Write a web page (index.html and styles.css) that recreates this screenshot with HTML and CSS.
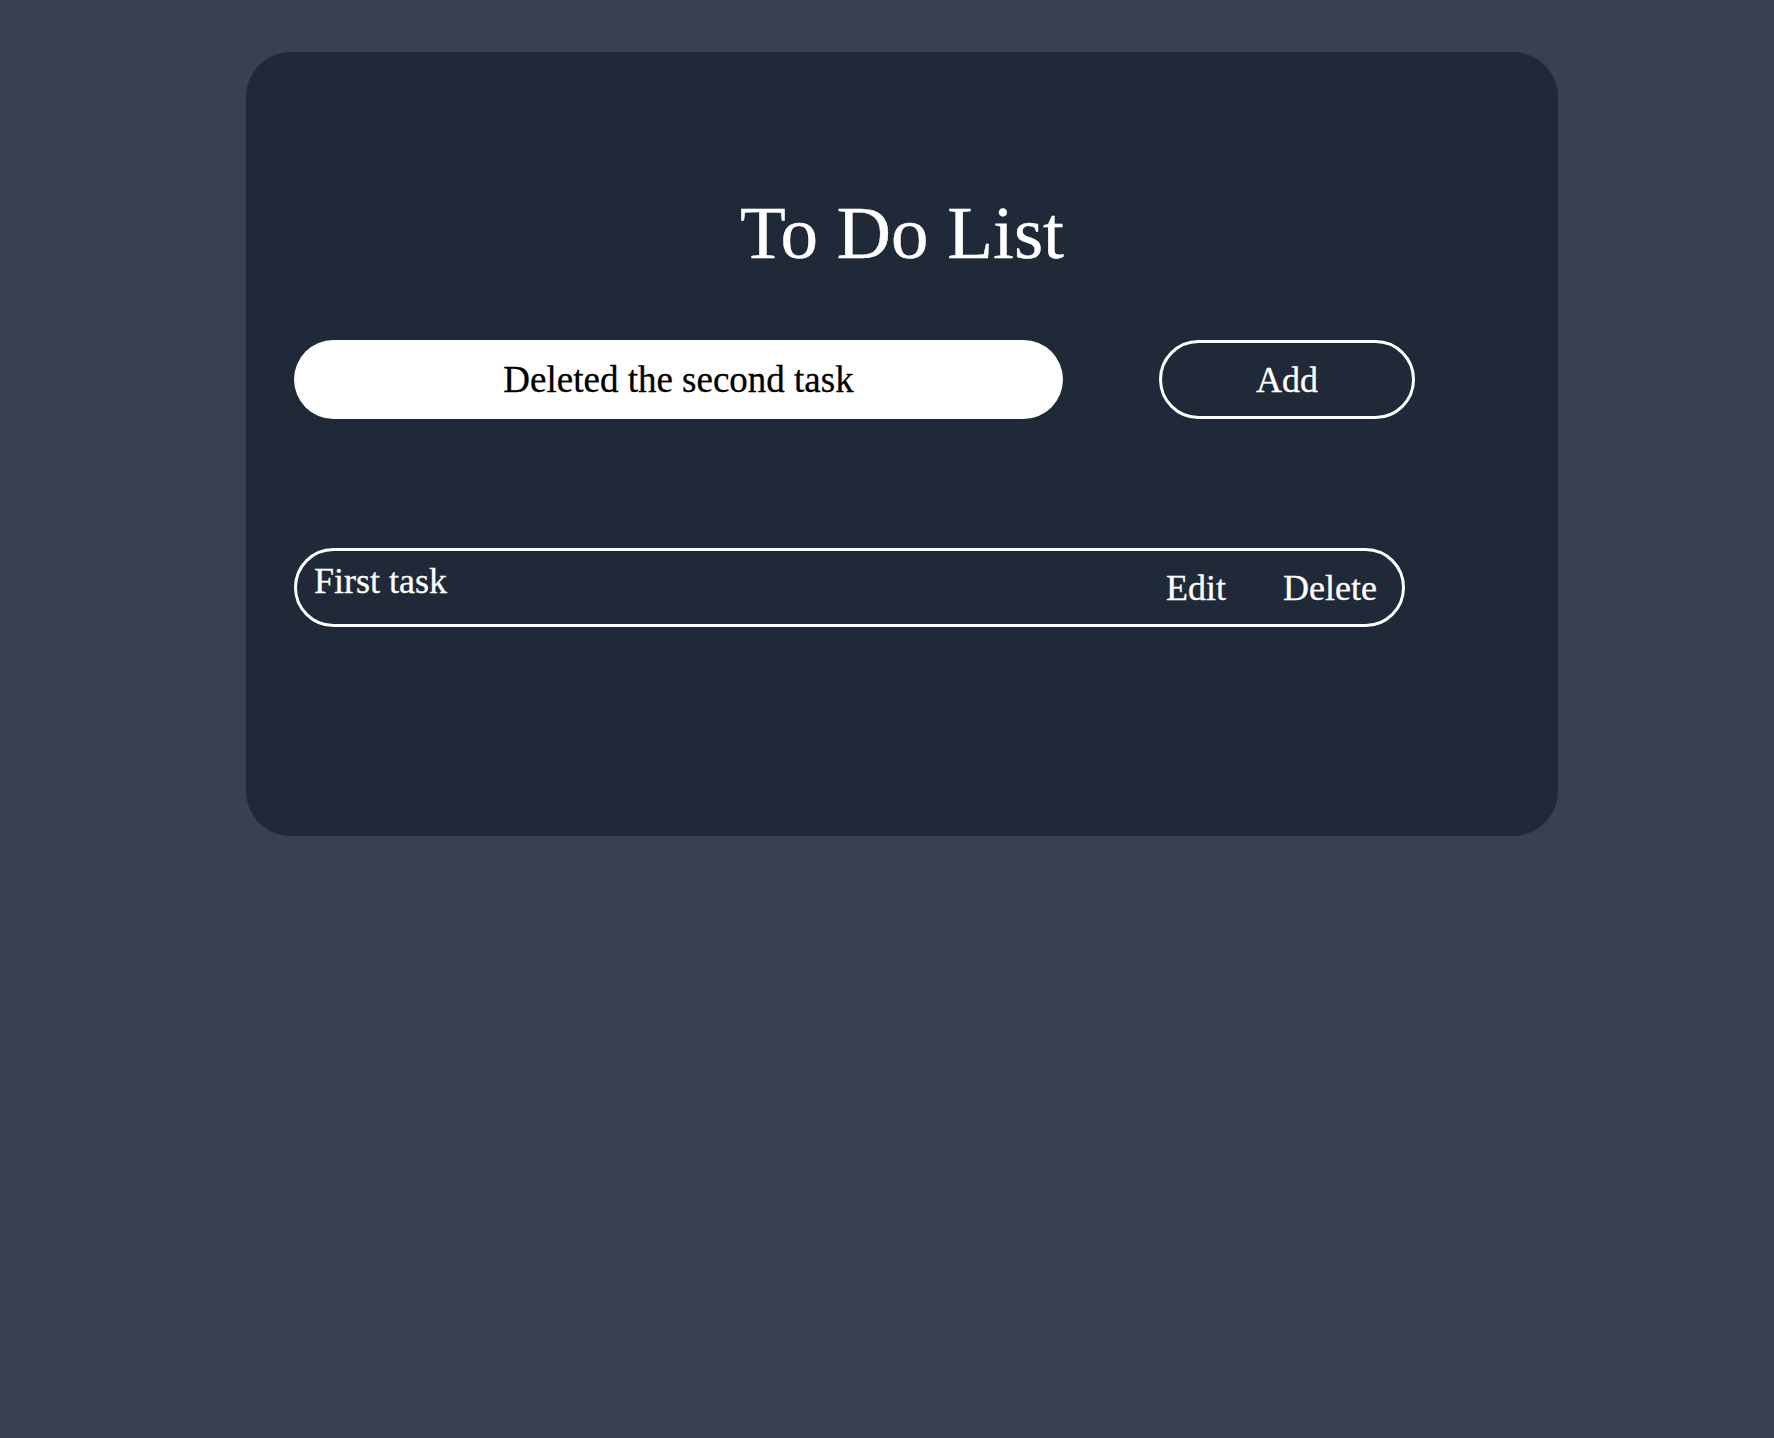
FILE: index.html
```html
<!DOCTYPE html>
<html lang="en">
<head>
<meta charset="utf-8">
<title>To Do List</title>
<link rel="stylesheet" href="styles.css">
</head>
<body>
  <main class="card">
    <h1 class="title">To Do List</h1>
    <div class="form">
      <div class="task-input">Deleted the second task</div>
      <button class="add-btn" type="button">Add</button>
    </div>
    <ul class="list">
      <li class="item">
        <span class="item-text">First task</span>
        <div class="actions">
          <button class="action" type="button">Edit</button>
          <button class="action" type="button">Delete</button>
        </div>
      </li>
    </ul>
  </main>
</body>
</html>
```

FILE: styles.css
```css
html, body {
  margin: 0;
  padding: 0;
}
body {
  background: #374151;
  min-height: 1438px;
  padding-top: 52px;
  box-sizing: border-box;
  font-family: "Liberation Serif", "Times New Roman", serif;
}
.card {
  margin-left: 246px;
  width: 1312px;
  height: 784px;
  box-sizing: border-box;
  background: #1f2937;
  border-radius: 45px;
  padding: 137px 48px 0;
  color: #fff;
}
.title {
  margin: 0;
  font-size: 75px;
  line-height: 88px;
  font-weight: 400;
  text-align: center;
  -webkit-text-stroke: 0.4px #fff;
}
.form {
  display: flex;
  gap: 96px;
  margin-top: 63px;
}
.task-input {
  width: 769px;
  height: 79px;
  box-sizing: border-box;
  background: #fff;
  color: #000;
  border-radius: 40px;
  display: flex;
  align-items: center;
  justify-content: center;
  font-size: 37px;
  -webkit-text-stroke: 0.3px #000;
}
.add-btn {
  width: 256px;
  height: 79px;
  box-sizing: border-box;
  background: transparent;
  color: #fff;
  border: 3px solid #fff;
  border-radius: 40px;
  font-family: inherit;
  font-size: 36px;
  padding: 0;
  -webkit-text-stroke: 0.3px #fff;
}
.list {
  list-style: none;
  margin: 129px 0 0;
  padding: 0;
}
.item {
  width: 1111px;
  height: 79px;
  box-sizing: border-box;
  border: 3px solid #fff;
  border-radius: 40px;
  display: flex;
  justify-content: space-between;
  padding: 0 25px 0 17px;
  font-size: 36px;
  -webkit-text-stroke: 0.3px #fff;
}
.item-text {
  line-height: 41px;
  padding-top: 10px;
}
.actions {
  display: flex;
  gap: 57px;
  align-items: center;
}
.action {
  background: none;
  border: 0;
  padding: 0;
  color: #fff;
  font-family: inherit;
  font-size: 36px;
  -webkit-text-stroke: 0.3px #fff;
}
```
